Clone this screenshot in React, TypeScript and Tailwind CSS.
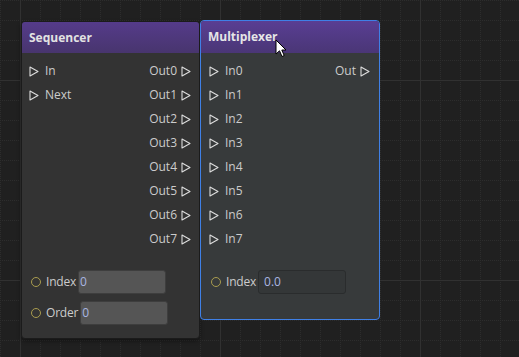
import React from "react";

const font = { fontFamily: '"Open Sans", "Noto Sans", sans-serif' };

const Tri = () => (
  <svg width="10" height="11" viewBox="0 0 10 11" className="shrink-0">
    <path d="M1 1 L9 5.5 L1 10 Z" fill="none" stroke="#dcdcdc" strokeWidth="1.1" strokeLinejoin="round" />
  </svg>
);

const Dot = () => <span className="w-[10px] h-[10px] rounded-full border-[1.5px] border-[#a99c4e] shrink-0" />;

const InPort = ({ label }: { label: string }) => (
  <div className="h-6 flex items-center gap-[6px]">
    <Tri />
    <span>{label}</span>
  </div>
);

const OutPort = ({ label }: { label: string }) => (
  <div className="h-6 flex items-center justify-end gap-[4px]">
    <span>{label}</span>
    <Tri />
  </div>
);

const Field = ({ label, value, dark }: { label: string; value: string; dark?: boolean }) => (
  <div className="h-6 flex items-center">
    <Dot />
    <span className="ml-[5px] mr-[2px] tracking-[-0.2px]">{label}</span>
    <div
      className={
        dark
          ? "w-[88px] h-6 rounded-[3px] bg-[#343738] border border-[#2a2c2d] flex items-center px-[5px] text-[#a9b6e2]"
          : "w-[88px] h-6 rounded-[3px] bg-[#555555] border border-[#3e3e3e] flex items-center px-[1px] text-[#a9b6e2]"
      }
    >
      {value}
    </div>
  </div>
);

const Grid = () => (
  <svg className="absolute inset-0" width="519" height="357">
    <defs>
      <pattern id="minor" width="20" height="20" patternUnits="userSpaceOnUse">
        <path d="M0 0.5 H20 M0.5 0 V20" stroke="#2d2d2d" strokeWidth="1" strokeDasharray="1 1" />
      </pattern>
      <pattern id="major" x="20" y="80" width="200" height="200" patternUnits="userSpaceOnUse">
        <path d="M0 0.5 H200 M0.5 0 V200" stroke="#313131" strokeWidth="1" />
      </pattern>
    </defs>
    <rect width="519" height="357" fill="url(#minor)" />
    <rect width="519" height="357" fill="url(#major)" />
  </svg>
);

const Cursor = () => (
  <svg className="absolute left-[275px] top-[39px]" width="14" height="20" viewBox="0 0 14 20">
    <path d="M1 1 L1 15 L4.5 11.8 L7 17.5 L9.2 16.5 L6.8 11 L11 11 Z" fill="#ffffff" stroke="#000000" strokeWidth="1" strokeLinejoin="round" />
  </svg>
);

export default function App() {
  return (
    <div className="relative w-[519px] h-[357px] bg-[#202020] overflow-hidden text-[12px]" style={font}>
      <Grid />

      <div className="absolute left-[21px] top-[21px] w-[179px] h-[318px] rounded-[4px] bg-[#333333] border border-[#1b1b1b] overflow-hidden flex flex-col shadow-[0_2px_4px_rgba(0,0,0,0.4)]">
        <div className="h-[31px] shrink-0 bg-gradient-to-b from-[#553b8a] to-[#48356e] px-[7px] flex items-center font-bold text-[#e2e2e2]">
          Sequencer
        </div>
        <div className="flex justify-between pt-[6px] pl-[7px] pr-[8px] text-[#cccccc]">
          <div className="flex flex-col">
            <InPort label="In" />
            <InPort label="Next" />
          </div>
          <div className="flex flex-col">
            {["Out0", "Out1", "Out2", "Out3", "Out4", "Out5", "Out6", "Out7"].map((o) => (
              <OutPort key={o} label={o} />
            ))}
          </div>
        </div>
        <div className="flex flex-col gap-[7px] mt-[19px] pl-[9px] text-[#cccccc]">
          <Field label="Index" value="0" />
          <Field label="Order" value="0" />
        </div>
      </div>

      <div className="absolute left-[200px] top-[20px] w-[180px] h-[300px] rounded-[4px] bg-[#373a3b] border border-[#3f80e6] overflow-hidden flex flex-col">
        <div className="h-[32px] shrink-0 bg-gradient-to-b from-[#593e93] to-[#4a3676] px-[7px] flex items-center font-bold text-[#e6e6e6]">
          Multiplexer
        </div>
        <div className="flex justify-between pt-[6px] pl-[8px] pr-[9px] text-[#cccccc]">
          <div className="flex flex-col">
            {["In0", "In1", "In2", "In3", "In4", "In5", "In6", "In7"].map((i) => (
              <InPort key={i} label={i} />
            ))}
          </div>
          <div className="flex flex-col">
            <OutPort label="Out" />
          </div>
        </div>
        <div className="flex flex-col mt-[19px] pl-[10px] text-[#cccccc]">
          <Field label="Index" value="0.0" dark />
        </div>
      </div>

      <Cursor />
    </div>
  );
}
